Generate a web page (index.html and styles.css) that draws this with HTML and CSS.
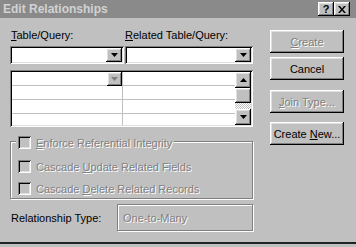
FILE: index.html
```html
<!DOCTYPE html>
<html lang="en">
<head>
    <meta charset="UTF-8">
    <title>Edit Relationships</title>
    <link rel="stylesheet" href="styles.css">
</head>
<body>
    <div class="dialog">
        <div class="titlebar">
            <span class="title">Edit Relationships</span>
            <span class="tbtn raised">?</span>
            <span class="tbtn raised">
                <svg width="8" height="7" viewBox="0 0 8 7"><path d="M0 0h2l2 2.5L6 0h2L5 3.5 8 7H6L4 4.5 2 7H0l3-3.5z" fill="#000"/></svg>
            </span>
        </div>

        <div class="main">
            <div class="left">
                <div class="labels">
                    <span><u>T</u>able/Query:</span>
                    <span><u>R</u>elated Table/Query:</span>
                </div>
                <div class="combos">
                    <div class="combo">
                        <span class="drop raised"><svg width="7" height="4"><path d="M0 0h7L3.5 4z" fill="#000"/></svg></span>
                    </div>
                    <div class="combo">
                        <span class="drop raised"><svg width="7" height="4"><path d="M0 0h7L3.5 4z" fill="#000"/></svg></span>
                    </div>
                </div>

                <div class="grid">
                    <div class="cells">
                        <div class="row">
                            <div class="cell first"><span class="cell-drop raised"><svg width="7" height="4"><path d="M0 0h7L3.5 4z" fill="#808080"/></svg></span></div>
                            <div class="cell"></div>
                        </div>
                        <div class="row"><div class="cell first"></div><div class="cell"></div></div>
                        <div class="row"><div class="cell first"></div><div class="cell"></div></div>
                        <div class="row last"><div class="cell first"></div><div class="cell"></div></div>
                    </div>
                    <div class="vscroll">
                        <span class="sbtn raised"><svg width="7" height="4"><path d="M3.5 0L7 4H0z" fill="#000"/></svg></span>
                        <span class="thumb raised"></span>
                        <span class="track"></span>
                        <span class="sbtn raised"><svg width="7" height="4"><path d="M0 0h7L3.5 4z" fill="#000"/></svg></span>
                    </div>
                </div>

                <div class="group">
                    <div class="check legend"><span class="box"></span><span class="off"><u>E</u>nforce Referential Integrity</span></div>
                    <div class="check"><span class="box"></span><span class="off">Cascade <u>U</u>pdate Related Fields</span></div>
                    <div class="check"><span class="box"></span><span class="off">Cascade <u>D</u>elete Related Records</span></div>
                </div>

                <div class="reltype">
                    <span class="rel-label">Relationship Type:</span>
                    <span class="rel-box"><span class="off">One-to-Many</span></span>
                </div>
            </div>

            <div class="buttons">
                <span class="btn raised"><span class="off"><u>C</u>reate</span></span>
                <span class="btn raised"><span>Cancel</span></span>
                <span class="btn raised join"><span class="off"><u>J</u>oin Type...</span></span>
                <span class="btn raised new"><span>Create <u>N</u>ew...</span></span>
            </div>
        </div>
    </div>
</body>
</html>
```

FILE: styles.css
```css
body {
    margin: 0;
    background: #c0c0c0;
    font-family: "Liberation Sans", Arial, sans-serif;
    font-size: 11px;
    color: #000;
}

.dialog {
    height: 242px;
    border-bottom: 2px solid #222;
}

.raised {
    background: #c0c0c0;
    box-shadow: inset -1px -1px #000, inset 1px 1px #fff, inset -2px -2px #808080, inset 2px 2px #dfdfdf;
}

.off {
    color: #808080;
    text-shadow: 1px 1px 0 #fff;
}

/* title bar */
.titlebar {
    height: 18px;
    background: #8a8a8a;
    display: flex;
    align-items: center;
    padding: 0 6px 0 3px;
}

.title {
    flex: 1;
    font-weight: bold;
    font-size: 12px;
    color: #d2d2d2;
}

.tbtn {
    width: 16px;
    height: 14px;
    display: flex;
    align-items: center;
    justify-content: center;
    font-weight: bold;
    font-size: 11px;
}

/* main area */
.main {
    display: flex;
    padding: 11px 0 0 10px;
}

.left {
    width: 243px;
}

.labels {
    display: grid;
    grid-template-columns: 114px 1fr;
    height: 13px;
    line-height: 13px;
    padding-left: 1px;
    margin-bottom: 4px;
}

.combos {
    display: grid;
    grid-template-columns: 114px 128px;
    column-gap: 1px;
}

.combo {
    height: 18px;
    padding: 2px;
    box-sizing: border-box;
    background: #fff;
    box-shadow: inset 1px 1px #808080, inset -1px -1px #fff, inset 2px 2px #000, inset -2px -2px #dfdfdf;
    display: flex;
    justify-content: flex-end;
}

.drop {
    width: 16px;
    height: 14px;
    display: flex;
    align-items: center;
    justify-content: center;
}

/* grid of fields */
.grid {
    margin-top: 6px;
    height: 57px;
    padding: 2px;
    box-sizing: border-box;
    background: #fff;
    box-shadow: inset 1px 1px #808080, inset -1px -1px #fff, inset 2px 2px #000, inset -2px -2px #dfdfdf;
    display: flex;
}

.cells {
    flex: 1;
    display: flex;
    flex-direction: column;
}

.row {
    display: flex;
    height: 13px;
    border-bottom: 1px solid #c0c0c0;
}

.row.last {
    flex: 1;
    border-bottom: none;
}

.cell {
    flex: 1;
}

.cell.first {
    flex: none;
    width: 110px;
    border-right: 1px solid #c0c0c0;
    display: flex;
    justify-content: flex-end;
}

.cell-drop {
    width: 15px;
    height: 14px;
    display: flex;
    align-items: center;
    justify-content: center;
}

.vscroll {
    width: 16px;
    display: flex;
    flex-direction: column;
}

.sbtn {
    height: 16px;
    display: flex;
    align-items: center;
    justify-content: center;
}

.thumb {
    height: 15px;
}

.track {
    flex: 1;
    background: repeating-conic-gradient(#fff 0 25%, #c0c0c0 0 50%) 0 0 / 2px 2px;
}

/* checkbox group */
.group {
    margin-top: 14px;
    border: 1px solid #808080;
    box-shadow: inset 1px 1px #fff, 1px 1px #fff;
    padding: 0 0 4px 7px;
    height: 58px;
    box-sizing: border-box;
}

.check {
    display: flex;
    align-items: center;
    gap: 5px;
    height: 13px;
    margin-top: 9px;
}

.check.legend {
    width: fit-content;
    margin: -6px 0 11px -2px;
    padding: 0 2px;
    background: #c0c0c0;
}

.box {
    width: 13px;
    height: 13px;
    box-sizing: border-box;
    box-shadow: inset 1px 1px #808080, inset -1px -1px #fff, inset 2px 2px #000, inset -2px -2px #dfdfdf;
}

/* relationship type */
.reltype {
    margin-top: 5px;
    display: flex;
    align-items: center;
}

.rel-label {
    width: 106px;
    padding-left: 1px;
}

.rel-box {
    flex: 1;
    height: 27px;
    box-sizing: border-box;
    border: 1px solid #808080;
    box-shadow: inset 1px 1px #fff, 1px 1px #fff;
    display: flex;
    align-items: center;
    padding-left: 5px;
}

/* buttons */
.buttons {
    margin: 1px 0 0 17px;
    width: 74px;
    display: flex;
    flex-direction: column;
}

.btn {
    height: 23px;
    display: flex;
    align-items: center;
    justify-content: center;
    margin-bottom: 4px;
}

.btn.join {
    margin-top: 6px;
}

.btn.new {
    margin-top: 5px;
}
```
